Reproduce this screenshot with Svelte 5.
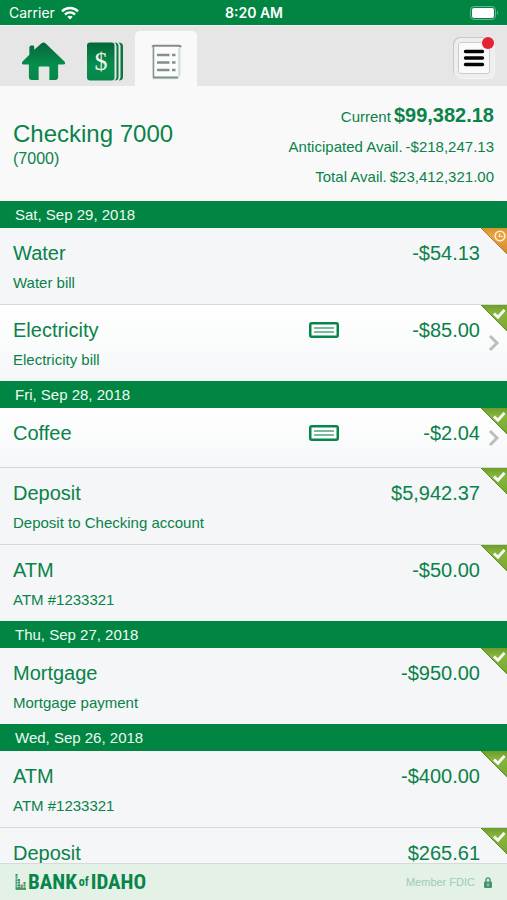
<script>
  const days = [
    {
      date: 'Sat, Sep 29, 2018',
      items: [
        { name: 'Water', memo: 'Water bill', amount: '-$54.13', status: 'pending' },
        { name: 'Electricity', memo: 'Electricity bill', amount: '-$85.00', status: 'cleared', check: true }
      ]
    },
    {
      date: 'Fri, Sep 28, 2018',
      items: [
        { name: 'Coffee', memo: '', amount: '-$2.04', status: 'cleared', check: true },
        { name: 'Deposit', memo: 'Deposit to Checking account', amount: '$5,942.37', status: 'cleared' },
        { name: 'ATM', memo: 'ATM #1233321', amount: '-$50.00', status: 'cleared' }
      ]
    },
    {
      date: 'Thu, Sep 27, 2018',
      items: [{ name: 'Mortgage', memo: 'Mortgage payment', amount: '-$950.00', status: 'cleared' }]
    },
    {
      date: 'Wed, Sep 26, 2018',
      items: [
        { name: 'ATM', memo: 'ATM #1233321', amount: '-$400.00', status: 'cleared' },
        { name: 'Deposit', memo: '', amount: '$265.61', status: 'cleared' }
      ]
    }
  ];
</script>

{#snippet content(item)}
  <span class="text">
    <span class="name">{item.name}</span>
    {#if item.memo}<span class="memo">{item.memo}</span>{/if}
  </span>
  {#if item.check}
    <svg class="cheque" width="30" height="16" viewBox="0 0 30 16" aria-hidden="true">
      <rect x="1.25" y="1.25" width="27.5" height="13.5" rx="1.5" fill="#fff" stroke="#078649" stroke-width="2.5" />
      <path d="M5 6h20M5 10h20" stroke="#4ba67b" stroke-width="1.6" />
    </svg>
  {/if}
  <span class="amount">{item.amount}</span>
  <svg class="corner" width="26" height="26" viewBox="0 0 26 26" aria-hidden="true">
    {#if item.status === 'pending'}
      <path d="M0 0H26V26Z" fill="url(#orange)" />
      <path d="M0 0L26 26" stroke="#b97a2c" stroke-width="1" />
      <circle cx="19" cy="8" r="4.8" fill="none" stroke="#fff0d2" stroke-width="1.6" />
      <path d="M18.500 5.500V8.500H21.500" fill="none" stroke="#fff0d2" stroke-width="1.2" />
    {:else}
      <path d="M0 0H26V26Z" fill="url(#green)" />
      <path d="M0 0L26 26" stroke="#5b8a22" stroke-width="1" />
      <path d="M13 8.500L17 12.200L23.500 4.800" fill="none" stroke="#fff" stroke-width="2.8" />
    {/if}
  </svg>
  {#if item.check}
    <svg class="chevron" width="12" height="18" viewBox="0 0 12 18" aria-hidden="true">
      <path d="M2 2L9 9L2 16" fill="none" stroke="#bdbdbd" stroke-width="3" />
    </svg>
  {/if}
{/snippet}

<div class="app">
  <svg class="defs" width="0" height="0" aria-hidden="true">
    <defs>
      <linearGradient id="orange" x1="0" y1="0" x2="0" y2="1">
        <stop offset="0" stop-color="#d9922f" /><stop offset=".3" stop-color="#e9a445" /><stop offset="1" stop-color="#d08a30" />
      </linearGradient>
      <linearGradient id="green" x1="0" y1="0" x2="0" y2="1">
        <stop offset="0" stop-color="#6f9c2c" /><stop offset=".3" stop-color="#86b63b" /><stop offset="1" stop-color="#78a832" />
      </linearGradient>
      <linearGradient id="brand" x1="0" y1="0" x2="0" y2="1">
        <stop offset="0" stop-color="#04663a" /><stop offset=".6" stop-color="#068e4c" /><stop offset="1" stop-color="#07864a" />
      </linearGradient>
    </defs>
  </svg>

  <div class="status">
    <span class="carrier">
      Carrier
      <svg width="18" height="14" viewBox="0 0 18 14" aria-label="Wi-Fi">
        <path d="M1 5.300C5.500.9 12.500.9 17 5.300" fill="none" stroke="#fff" stroke-width="2.500" />
        <path d="M4 8.500C7 5.700 11 5.700 14 8.500" fill="none" stroke="#fff" stroke-width="2.400" />
        <path d="M6.300 10.800C8 9.300 10 9.300 11.700 10.800L9 13.600Z" fill="#fff" />
      </svg>
    </span>
    <span class="clock">8:20 AM</span>
    <svg class="battery" width="29" height="14" viewBox="0 0 29 14" aria-label="Battery">
      <rect x=".5" y=".5" width="25" height="13" rx="3.500" fill="none" stroke="#66b68d" />
      <rect x="2" y="2" width="22" height="10" rx="2" fill="#fff" />
      <path d="M27 4.800Q29 7 27 9.200Z" fill="#66b68d" />
    </svg>
  </div>

  <nav class="tabs">
    <button class="tab" aria-label="Home">
      <svg width="45" height="39" viewBox="0 0 46 40">
        <path d="M8.500 5.500Q8.500 3.500 10.500 3.500H12Q13.500 3.500 13.500 5V8L21 1.200Q23 -.4 25 1.200L44.500 20Q46.500 23 43 23H38V36Q38 39 35 39H29V26Q29 25 28 25H19Q18 25 18 26V39H11Q8 39 8 36V23H3Q-.5 23 1.500 20L8.500 13.200Z" fill="url(#brand)" />
      </svg>
    </button>
    <button class="tab" aria-label="Accounts">
      <svg width="37" height="39" viewBox="0 0 37 39">
        <path d="M27.500 .5Q31.500 .5 31.500 4V35Q31.500 38.500 27.500 38.500Q29.500 37 29.500 35V4Q29.500 2 27.500 .5ZM31.500 .5Q36 .5 36 4V35Q36 38.500 31.500 38.500Q33.500 37 33.500 35V4Q33.500 2 31.500 .5Z" fill="#07793f" />
        <rect x="0" y=".5" width="27.5" height="38" rx="3" fill="url(#brand)" />
        <text x="14" y="28" text-anchor="middle" class="dollar">$</text>
      </svg>
    </button>
    <button class="tab active" aria-label="Transactions" aria-current="page">
      <svg width="31" height="36" viewBox="0 0 31 36">
        <path d="M2 1H30V30Q29 34 27 35.500H1V3Z" fill="#dcefe6" />
        <path d="M3 2H28V32.500H2V4Z" fill="#fbfcfb" />
        <path d="M1.500 3Q1.500 1.800 3 1.800H28Q29.500 1.800 30 3.200" fill="none" stroke="#858c88" stroke-width="2" />
        <path d="M2.500 3V33.500" stroke="#8f9993" stroke-width="1.600" />
        <path d="M28 4V32" stroke="#cfdbd4" stroke-width="1.500" />
        <path d="M2 33.500H27" stroke="#858f89" stroke-width="2" />
        <path d="M6 11H18.500M21 11H24.500M6 18.500H18.500M21 18.500H24.500M6 26H18.500M21 26H24.500" stroke="#84908a" stroke-width="2.500" />
      </svg>
    </button>
    <button class="menu" aria-label="Menu">
      <svg width="22" height="18" viewBox="0 0 22 18"><path d="M2.500 2.500H19.500M2.500 9H19.500M2.500 15.500H19.500" stroke="#050505" stroke-width="3.400" stroke-linecap="round" /></svg>
      <span class="dot"></span>
    </button>
  </nav>

  <header class="account">
    <div>
      <h1>Checking 7000</h1>
      <p class="number">(7000)</p>
    </div>
    <dl>
      <div class="current"><dt>Current</dt><dd>$99,382.18</dd></div>
      <div><dt>Anticipated Avail.</dt><dd>-$218,247.13</dd></div>
      <div><dt>Total Avail.</dt><dd>$23,412,321.00</dd></div>
    </dl>
  </header>

  <main>
    {#each days as day}
      <section>
        <h2>{day.date}</h2>
        <ul>
          {#each day.items as item}
            <li>
              {#if item.check}
                <button class="row link">{@render content(item)}</button>
              {:else}
                <div class="row">{@render content(item)}</div>
              {/if}
            </li>
          {/each}
        </ul>
      </section>
    {/each}
  </main>

  <footer>
    <span class="logo">
      <svg width="11" height="16" viewBox="0 0 11 16" aria-hidden="true">
        <path d="M1.500 0V16M4 5V16" stroke="#2c9460" stroke-width="2" stroke-dasharray="2 .6" />
        <path d="M6.500 13V16M9.500 8V16" stroke="#2c9460" stroke-width="2" stroke-dasharray="2 .6" />
        <path d="M1 15H11" stroke="#2c9460" stroke-width="1.500" />
        <path d="M5.300 10.500H8V13H5.300Z" fill="#dc7373" />
      </svg>
      <span>BANK</span><span class="of">of</span><span>IDAHO</span>
    </span>
    <span class="fdic">
      Member FDIC
      <svg width="8" height="11" viewBox="0 0 8 11" aria-hidden="true">
        <path d="M2 5V3Q2 1 4 1Q6 1 6 3V5" fill="none" stroke="#539978" stroke-width="1.500" />
        <rect x="0" y="4.500" width="8" height="6.500" rx="1" fill="#4b9470" />
        <path d="M4 6.500V9" stroke="#b9dcc8" stroke-width="1.200" />
      </svg>
    </span>
  </footer>
</div>

<style>
  :global(body) {
    margin: 0;
  }
  .app {
    display: flex;
    flex-direction: column;
    height: 100vh;
    overflow: hidden;
    background: #f9f9f9;
    color: #0a8249;
    font-family: "Liberation Sans", Arial, sans-serif;
    font-size: 15px;
    line-height: 20px;
  }
  .defs {
    position: absolute;
  }
  svg {
    display: block;
    flex: none;
  }
  button {
    margin: 0;
    padding: 0;
    border: 0;
    background: none;
    color: inherit;
    font: inherit;
    text-align: left;
    cursor: pointer;
  }
  h1, h2, p, ul, dl, dd {
    margin: 0;
    padding: 0;
    font-weight: 400;
  }
  .status {
    display: grid;
    grid-template-columns: 1fr auto 1fr;
    align-items: center;
    flex: none;
    height: 25px;
    padding: 1px 8px 0 9px;
    box-sizing: border-box;
    background: #008542;
    color: #fff;
    font-family: Inter, sans-serif;
    font-size: 14px;
  }
  .carrier {
    display: flex;
    align-items: center;
    gap: 6px;
  }
  .clock {
    font-weight: 600;
    font-size: 14px;
  }
  .battery {
    justify-self: end;
  }
  .tabs {
    display: flex;
    align-items: flex-end;
    flex: none;
    height: 60px;
    padding: 0 13px 0 10px;
    border-top: 1px solid #f3f6f4;
    background: #e6e6e6;
  }
  .tab {
    display: flex;
    align-items: center;
    justify-content: center;
    width: 66px;
    height: 55px;
    padding-top: 6px;
    box-sizing: border-box;
  }
  .tab:nth-child(2) {
    width: 59px;
  }
  .tab.active {
    width: 62px;
    border-radius: 5px 5px 0 0;
    background: #f9f9f9;
  }
  .dollar {
    fill: #f1f6ec;
    font-family: "Liberation Serif", serif;
    font-size: 26px;
  }
  .menu {
    position: relative;
    display: flex;
    align-items: center;
    justify-content: center;
    align-self: center;
    width: 40px;
    height: 40px;
    margin: 3px 0 0 auto;
    border: 4px solid #eee;
    border-radius: 7px;
    box-sizing: border-box;
    background: #fafafa;
    box-shadow: inset 0 0 0 1px #ccc, -1px -1px 0 #c9c9c9, 1px 1px 0 #f4f4f4;
  }
  .dot {
    position: absolute;
    top: -5px;
    right: -4px;
    width: 12px;
    height: 12px;
    border-radius: 50%;
    background: #e02434;
    box-shadow: 0 0 0 1px #f4e4e5;
  }
  .account {
    display: flex;
    justify-content: space-between;
    flex: none;
    min-height: 115px;
    padding: 14px 13px 0;
    box-sizing: border-box;
  }
  h1 {
    padding-top: 19px;
    font-size: 24px;
    line-height: 30px;
  }
  .number {
    font-size: 16px;
  }
  dl {
    text-align: right;
  }
  dl div {
    display: flex;
    align-items: baseline;
    justify-content: flex-end;
    gap: 3px;
    line-height: 30px;
  }
  .current dd {
    font-size: 20px;
    font-weight: 700;
  }
  main {
    flex: 1;
    min-height: 0;
    overflow-y: auto;
    scrollbar-width: none;
  }
  h2 {
    height: 27px;
    padding: 0 15px;
    background: #008542;
    color: #effaf3;
    font-size: 15px;
    line-height: 28px;
  }
  ul {
    list-style: none;
  }
  li + li {
    border-top: 1px solid #d5d9db;
  }
  .row {
    position: relative;
    display: flex;
    align-items: flex-start;
    width: 100%;
    min-height: 59px;
    padding: 10px 27px 11px 13px;
    box-sizing: border-box;
    background: #f5f6f8;
  }
  .link {
    background: linear-gradient(#fff, #f5f7f8);
  }
  .text {
    flex: 1;
    display: flex;
    flex-direction: column;
    gap: 5px;
  }
  .name, .amount {
    font-size: 20px;
    line-height: 30px;
  }
  .amount {
    width: 141px;
    text-align: right;
  }
  .cheque {
    margin-top: 7px;
  }
  .corner {
    position: absolute;
    top: 0;
    right: 0;
  }
  .chevron {
    position: absolute;
    top: 50%;
    right: 7px;
    margin-top: -9px;
  }
  footer {
    display: flex;
    align-items: center;
    justify-content: space-between;
    flex: none;
    height: 37px;
    padding: 0 15px;
    border-top: 1px solid #d3dcd6;
    box-sizing: border-box;
    background: #e3f1e6;
  }
  .logo {
    display: flex;
    align-items: center;
    gap: 2px;
    color: #07854a;
    font-family: "Liberation Sans Narrow", "Roboto Condensed", "Liberation Sans", sans-serif;
    font-size: 21px;
    font-weight: 700;
  }
  .of {
    font-size: 12px;
  }
  .fdic {
    display: flex;
    align-items: center;
    gap: 9px;
    color: #9bceb2;
    font-size: 11px;
  }
</style>
